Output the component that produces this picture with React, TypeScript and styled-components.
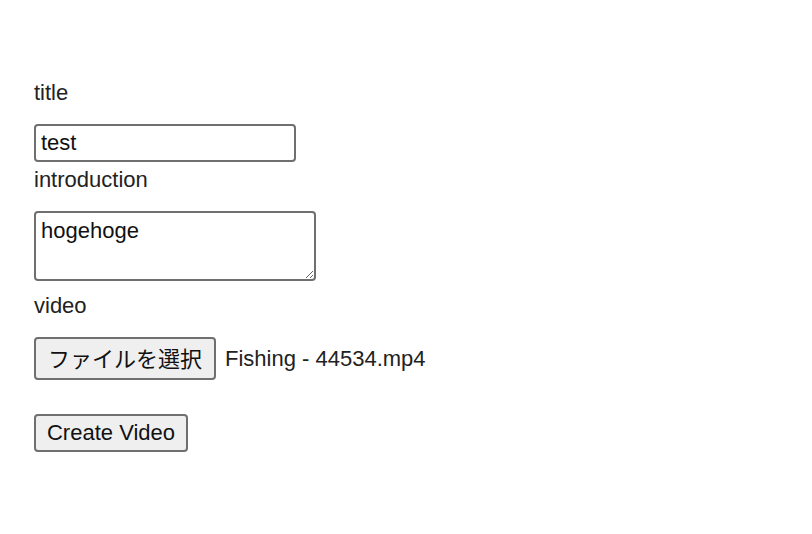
import React, { useState } from "react";
import styled, { createGlobalStyle } from "styled-components";

const GlobalStyle = createGlobalStyle`
  html, body {
    margin: 0;
    padding: 0;
    background: #ffffff;
  }
  body {
    font-family: "Liberation Sans", Arial, "Noto Sans CJK JP", sans-serif;
    color: #222;
  }
`;

const Form = styled.form`
  display: flex;
  flex-direction: column;
  align-items: flex-start;
  padding: 80px 0 0 34px;
`;

const Label = styled.div<{ $top?: number; $bottom?: number }>`
  font-size: 22px;
  line-height: 25px;
  color: #222;
  margin-top: ${(p) => p.$top ?? 0}px;
  margin-bottom: ${(p) => p.$bottom ?? 19}px;
`;

const TextInput = styled.input`
  box-sizing: border-box;
  width: 262px;
  height: 38px;
  padding: 0 5px;
  border: 2px solid #6f6f6f;
  border-radius: 4px;
  font-family: "Liberation Sans", Arial, sans-serif;
  font-size: 22px;
  color: #111;
  background: #fff;
  outline: none;
`;

const TextArea = styled.textarea`
  box-sizing: border-box;
  width: 282px;
  height: 70px;
  padding: 5px 5px 4px;
  border: 2px solid #6f6f6f;
  border-radius: 4px;
  font-family: "Liberation Sans", Arial, sans-serif;
  font-size: 22px;
  line-height: 25px;
  color: #111;
  background: #fff;
  outline: none;
  resize: both;
  display: block;
`;

const FileRow = styled.div`
  display: flex;
  align-items: center;
  gap: 9px;
`;

const GreyButton = styled.button<{ $w: number; $h: number; $lift?: number }>`
  box-sizing: border-box;
  width: ${(p) => p.$w}px;
  height: ${(p) => p.$h}px;
  padding: 0 0 ${(p) => p.$lift ?? 0}px;
  border: 2px solid #6f6f6f;
  border-radius: 4px;
  background: #efefef;
  color: #111;
  font-family: "Liberation Sans", Arial, "Noto Sans CJK JP", sans-serif;
  font-size: 22px;
  cursor: pointer;
  display: flex;
  align-items: center;
  justify-content: center;
`;

const FileName = styled.span`
  font-size: 22px;
  color: #222;
`;

const SubmitWrap = styled.div`
  margin-top: 34px;
`;

export default function App() {
  const [title, setTitle] = useState("test");
  const [intro, setIntro] = useState("hogehoge");

  return (
    <>
      <GlobalStyle />
      <Form onSubmit={(e) => e.preventDefault()}>
        <Label>title</Label>
        <TextInput value={title} onChange={(e) => setTitle(e.target.value)} />
        <Label $top={5}>introduction</Label>
        <TextArea value={intro} onChange={(e) => setIntro(e.target.value)} />
        <Label $top={12} $bottom={19}>video</Label>
        <FileRow>
          <GreyButton type="button" $w={182} $h={43} $lift={4}>
            ファイルを選択
          </GreyButton>
          <FileName>Fishing - 44534.mp4</FileName>
        </FileRow>
        <SubmitWrap>
          <GreyButton type="submit" $w={154} $h={38}>
            Create Video
          </GreyButton>
        </SubmitWrap>
      </Form>
    </>
  );
}
